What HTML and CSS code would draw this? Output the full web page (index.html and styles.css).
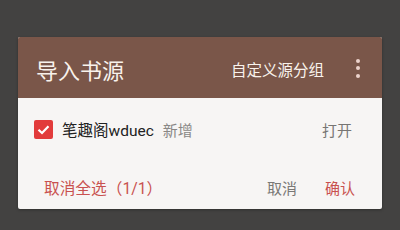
FILE: index.html
```html
<!DOCTYPE html>
<html>
<head>
<meta charset="utf-8">
<link rel="stylesheet" href="styles.css">
</head>
<body>
<div class="dialog">
  <div class="header">
    <div class="title">导入书源</div>
    <div class="custom">自定义源分组</div>
    <div class="more"><span></span><span></span><span></span></div>
  </div>
  <div class="body">
    <div class="row">
      <div class="check">
        <svg width="19" height="19" viewBox="0 0 19 19"><rect width="19" height="19" rx="2" fill="#e23b3b"/><path d="M4.5 9.8 L8 13 L14.5 6.2" fill="none" stroke="#fff" stroke-width="2.2"/></svg>
      </div>
      <span class="name">笔趣阁wduec</span>
      <span class="tag">新增</span>
      <span class="open">打开</span>
    </div>
  </div>
  <div class="footer">
    <span class="selall">取消全选（1/1）</span>
    <span class="cancel">取消</span>
    <span class="ok">确认</span>
  </div>
</div>
</body>
</html>
```
FILE: styles.css
```css
html, body {
  margin: 0;
  padding: 0;
  background: #434241;
  width: 400px;
  height: 230px;
  overflow: hidden;
  font-family: Roboto, "Noto Sans CJK SC", sans-serif;
}
body {
  padding-top: 37px;
  padding-left: 18px;
  box-sizing: border-box;
}
.dialog {
  width: 364px;
  height: 172px;
  background: #f7f5f4;
  border-radius: 2px;
  overflow: hidden;
  display: flex;
  flex-direction: column;
  box-shadow: 0 1px 3px rgba(0,0,0,0.3);
}
.header {
  height: 61px;
  background: #7a5649;
  display: flex;
  align-items: center;
  padding-left: 18px;
  padding-right: 22px;
  color: #f8f2ec;
}
.title {
  font-size: 22px;
  flex: 1;
  margin-top: 2px;
}
.custom {
  font-size: 15.5px;
  margin-top: 2px;
}
.more {
  display: flex;
  flex-direction: column;
  gap: 3.5px;
  margin-left: 32px;
  margin-top: 1px;
}
.more span {
  width: 4px;
  height: 4px;
  border-radius: 50%;
  background: #ecd3cc;
}
.body {
  height: 61px;
  display: flex;
  align-items: center;
}
.row {
  display: flex;
  align-items: center;
  width: 100%;
  padding-left: 16px;
  padding-right: 30px;
  box-sizing: border-box;
  margin-top: 1px;
}
.check {
  width: 19px;
  height: 19px;
  margin-right: 9px;
}
.check svg { display: block; }
.name {
  font-size: 15.5px;
  color: #222;
}
.tag {
  font-size: 15px;
  color: #8a8886;
  margin-left: 9px;
  flex: 1;
}
.open {
  font-size: 15px;
  color: #777573;
}
.footer {
  flex: 1;
  display: flex;
  align-items: center;
  padding-left: 26px;
  padding-right: 27px;
  font-size: 15px;
  margin-top: 6px;
}
.selall {
  color: #c9514f;
  flex: 1;
  font-size: 15.7px;
}
.cancel {
  color: #7a7876;
  margin-right: 28px;
}
.ok {
  color: #c9514f;
}
```
